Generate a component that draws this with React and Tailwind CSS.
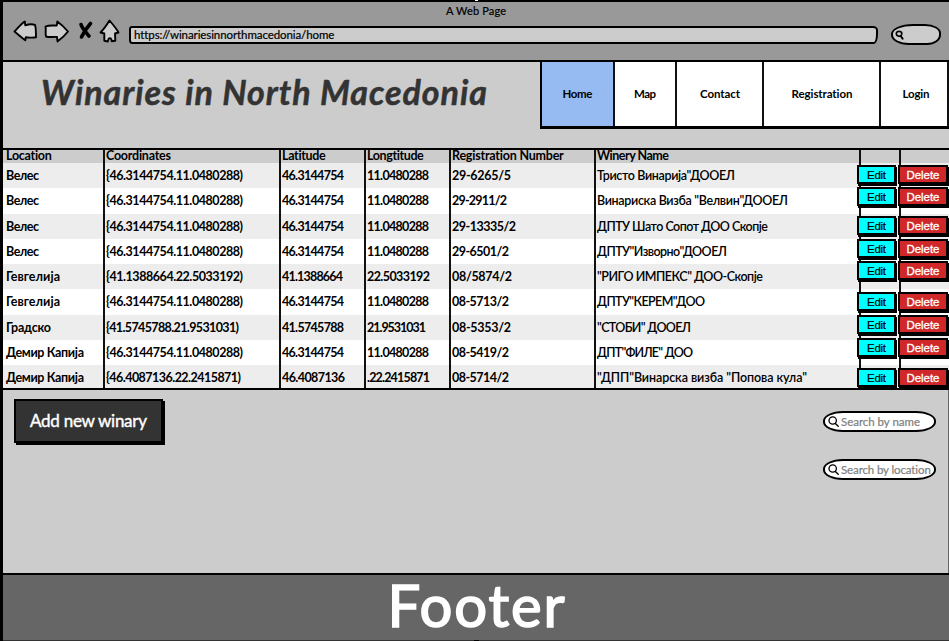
import { useLayoutEffect, useRef } from 'react';

// Spreads a line of text over a given width by adjusting its tracking.
function Fit({ w, className = '', children }) {
  const ref = useRef(null);
  useLayoutEffect(() => {
    const el = ref.current;
    el.style.letterSpacing = '0px';
    const natural = el.getBoundingClientRect().width;
    const n = String(children).length;
    el.style.letterSpacing = `${(w - natural) / (n - 1)}px`;
    el.style.marginRight = `${-(w - natural) / (n - 1)}px`;
  }, [w, children]);
  return (
    <span ref={ref} className={`inline-block whitespace-nowrap ${className}`}>
      {children}
    </span>
  );
}

const columns = [
  ['Location', 46],
  ['Coordinates', 65],
  ['Latitude', 44],
  ['Longtitude', 57],
  ['Registration Number', 112],
  ['Winery Name', 72],
];

const rows = [
  { h: 'h-[25px]', shift: 'mt-[2px]', cells: [['Велес', 33], ['{46.3144754.11.0480288)', 137], ['46.3144754', 62], ['11.0480288', 62], ['29-6265/5', 59], ['Тристо Винарија"ДООЕЛ', 138]] },
  { h: 'h-[26px]', shift: '-mt-px', cells: [['Велес', 33], ['{46.3144754.11.0480288)', 137], ['46.3144754', 62], ['11.0480288', 62], ['29-2911/2', 55], ['Винариска Визба "Велвин"ДООЕЛ', 191]] },
  { h: 'h-[25px]', shift: 'mt-[2px]', cells: [['Велес', 33], ['{46.3144754.11.0480288)', 137], ['46.3144754', 62], ['11.0480288', 62], ['29-13335/2', 64], ['ДПТУ Шато Сопот ДОО Скопје', 171]] },
  { h: 'h-[25px]', shift: 'mt-0', cells: [['Велес', 33], ['{46.3144754.11.0480288)', 137], ['46.3144754', 62], ['11.0480288', 62], ['29-6501/2', 57], ['ДПТУ"Изворно"ДООЕЛ', 130]] },
  { h: 'h-[25px]', shift: '-mt-[3px]', cells: [['Гевгелија', 54], ['{41.1388664.22.5033192)', 137], ['41.1388664', 61], ['22.5033192', 63], ['08/5874/2', 60], ['"РИГО ИМПЕКС" ДОО-Скопје', 166]] },
  { h: 'h-[26px]', shift: 'mt-[3px]', cells: [['Гевгелија', 54], ['{46.3144754.11.0480288)', 137], ['46.3144754', 62], ['11.0480288', 62], ['08-5713/2', 57], ['ДПТУ"КЕРЕМ"ДОО', 108]] },
  { h: 'h-[25px]', shift: 'mt-0', cells: [['Градско', 45], ['{41.5745788.21.9531031)', 133], ['41.5745788', 62], ['21.9531031', 59], ['08-5353/2', 59], ['"СТОБИ" ДООЕЛ', 94]] },
  { h: 'h-[25px]', shift: '-mt-[2px]', cells: [['Демир Капија', 78], ['{46.3144754.11.0480288)', 137], ['46.3144754', 62], ['11.0480288', 62], ['08-5419/2', 57], ['ДПТ"ФИЛЕ" ДОО', 96]] },
  { h: 'h-[23px]', shift: 'mt-[3px]', cells: [['Демир Капија', 78], ['{46.4087136.22.2415871)', 135], ['46.4087136', 63], ['.22.2415871', 63], ['08-5714/2', 57], ['"ДПП"Винарска визба "Попова кула"', 210]] },
];

const grid = 'grid grid-cols-[102px_176px_85px_85px_145px_265px_40px_48px]';
const line = 'border-r-2 border-[#111]';
const action =
  "relative flex h-[19px] items-center justify-center border-2 border-black font-['Liberation_Sans',sans-serif] text-[11.5px] font-normal shadow-[1px_2px_0_#000]";

function Lens({ className }) {
  return (
    <svg viewBox="0 0 11 11" className={className} fill="none" stroke="black" strokeLinecap="round">
      <circle cx="4.7" cy="4.5" r="3.7" strokeWidth="1.3" />
      <path d="M7.400 7.400 L10.200 10.200" strokeWidth="1.4" />
    </svg>
  );
}

function SmallLens() {
  return (
    <svg viewBox="0 0 9 10" className="h-[10px] w-[9px]" fill="none" stroke="black" strokeLinecap="round">
      <path d="M1.300 3.800 C1.300 1.800 3 1.200 4.400 1.300 C6.500 1.400 7 2.800 6.700 4.400 C6.300 6 4.500 6.400 3 6 C1.800 5.600 1.300 5 1.300 3.800 Z" strokeWidth="1.7" />
      <path d="M6 6.500 L7.600 8.600" strokeWidth="2" />
    </svg>
  );
}

function Toolbar() {
  return (
    <svg viewBox="0 0 112 28" className="ml-[10px] h-[28px] w-[112px] shrink-0" fill="#ccc" stroke="black" strokeWidth="1.9" strokeLinejoin="round" strokeLinecap="round">
      <path d="M1.500 14.500 C5 11 8 7 11.800 4.500 L12.300 8.300 C15.500 7.300 19 7 22 7.800 C23.300 12 22.800 16 23 20.300 C19.500 21 16 20.500 12.800 20.300 L12.300 23.300 C8.500 20.500 5 17.500 1.500 14.500 Z" />
      <path d="M32.500 9.500 C36 8 40 8.800 43.800 8.500 L44.300 4.500 C48.500 7.500 52 11 55 14.500 C52 18.500 48.500 21.500 44.500 24.500 L44 20 C40.500 19.500 37 20.800 33 19.500 C32 16 33.300 12.500 32.500 9.500 Z" />
      <path d="M68 7.500 C69 11 73 15.500 76 19 M77.500 6.500 C74 10.500 70.500 15.500 68.500 20" fill="none" strokeWidth="3.6" />
      <path d="M87.500 15.500 C91 12 94 7.500 96.500 3.500 C99.500 7 103 11 105.500 15.500 L102 16.500 L102.300 23.800 L98.800 24.300 C98.300 20 95.500 20 94.800 24.500 L91.300 23.800 L91.300 16.500 Z" />
    </svg>
  );
}

function SearchBox({ text, w }) {
  return (
    <div className="flex h-[21px] w-[113px] items-center rounded-[20px/10px] border-2 border-black bg-white pl-[3px] text-[11.5px] text-[#808080]">
      <Lens className="mr-[2px] h-[11px] w-[11px] shrink-0" />
      <Fit w={w} className="[-webkit-text-stroke:0.2px_#808080]">{text}</Fit>
    </div>
  );
}

export default function App() {
  return (
    <div className="relative flex h-[641px] w-[949px] flex-col overflow-hidden border-l-[3px] border-black bg-[#ccc] font-['Lato','Noto_Sans',sans-serif] text-black">
      <header className="h-[62px] shrink-0 border-y-2 border-black bg-[#999]">
        <div className="flex h-[18px] items-center justify-center text-[11px]">
          <Fit w={60} className="[-webkit-text-stroke:0.2px_black]">A Web Page</Fit>
        </div>
        <div className="flex h-[28px] items-center">
          <div className="-mt-[6px] flex"><Toolbar /></div>
          <div className="ml-[4px] mt-px flex h-[18px] w-[749px] items-center rounded-[3px_5px_4px_3px/3px_4px_10px_4px] border-2 border-black bg-[#ccc] pl-[3px] text-[11.5px]">
            <Fit w={200} className="[-webkit-text-stroke:0.2px_black]">https://winariesinnorthmacedonia/home</Fit>
          </div>
          <div className="ml-[13px] mt-px flex h-[21px] w-[50px] items-center rounded-[22px_16px_14px_18px/10px_9px_10px_10px] border-2 border-black bg-[#ccc] pl-[2px]">
            <SmallLens />
          </div>
        </div>
      </header>

      <div className="flex h-[86px] shrink-0 justify-between">
        <h1 className="ml-[38px] mt-[8px] text-[34px] leading-[44px] font-bold text-[#333] italic">
          <Fit w={446} className="[-webkit-text-stroke:0.5px_#333]">Winaries in North Macedonia</Fit>
        </h1>
        <nav className="grid h-[67px] grid-cols-[73px_62px_87px_117px_68px] border-b-[3px] border-l-2 border-black bg-white text-[11.5px] font-bold">
          <div className={`flex items-center justify-center bg-[#95bbf2] ${line}`}><Fit w={30}>Home</Fit></div>
          <div className={`flex items-center justify-center ${line}`}><Fit w={22}>Map</Fit></div>
          <div className={`flex items-center justify-center pl-px ${line}`}><Fit w={40}>Contact</Fit></div>
          <div className={`flex items-center justify-center pl-px ${line}`}><Fit w={61}>Registration</Fit></div>
          <div className={`flex items-center justify-center pl-[4px] ${line}`}><Fit w={27}>Login</Fit></div>
        </nav>
      </div>

      <main className="h-[242px] shrink-0 border-y-2 border-black text-[12.5px] leading-[14px] font-bold">
        <div className={`${grid} h-[13px] bg-[#ccc]`}>
          {columns.map(([name, w], i) => (
            <div key={name} className={`${line} ${i === 0 ? 'pl-[3px]' : 'pl-px'}`}>
              <Fit w={w} className="relative -top-px">{name}</Fit>
            </div>
          ))}
          <div className={line} />
          <div />
        </div>
        {rows.map((row, r) => (
          <div key={r} className={`${grid} ${row.h} ${r % 2 ? 'bg-white' : 'bg-[#ededed]'}`}>
            {row.cells.map(([text, w], i) => (
              <div key={i} className={`${line} pt-[6px] ${i === 0 ? 'pl-[3px]' : 'pl-px'}`}>
                <Fit w={w} className={i === 5 ? 'font-semibold' : ''}>{text}</Fit>
              </div>
            ))}
            <div className={line}>
              <button className={`${action} ${row.shift} -ml-[4px] w-[39px] bg-[#0ff]`}>
                <Fit w={19} className="[-webkit-text-stroke:0.2px_black]">Edit</Fit>
              </button>
            </div>
            <div>
              <button className={`${action} ${row.shift} -ml-[3px] w-[50px] bg-[#d02828] text-white`}>
                <Fit w={33} className="[-webkit-text-stroke:0.3px_white]">Delete</Fit>
              </button>
            </div>
          </div>
        ))}
      </main>

      <section className="flex h-[183px] shrink-0 justify-between border-r border-[#666] pt-[9px] pr-[12px] pl-[11px]">
        <button className="flex h-[44px] w-[149px] items-center justify-center border-2 border-black bg-[#333] text-[17px] text-white shadow-[2px_2px_0_#000]">
          <Fit w={117} className="[-webkit-text-stroke:0.4px_white]">Add new winary</Fit>
        </button>
        <div className="flex flex-col gap-[27px] pt-[12px]">
          <SearchBox text="Search by name" w={79} />
          <SearchBox text="Search by location" w={90} />
        </div>
      </section>

      <footer className="flex flex-1 justify-center border-t-2 border-b border-t-black border-b-[#333] bg-[#666] text-[58px] leading-[60px] text-white">
        <Fit w={177} className="[-webkit-text-stroke:1.600px_white]">Footer</Fit>
      </footer>

      <span className="absolute top-[320px] -left-[3px] h-[3px] w-[3px] bg-white" />
      <span className="absolute top-0 left-[472px] h-px w-[3px] bg-white" />
      <span className="absolute bottom-0 left-[471px] h-px w-[5px] bg-black" />
    </div>
  );
}
